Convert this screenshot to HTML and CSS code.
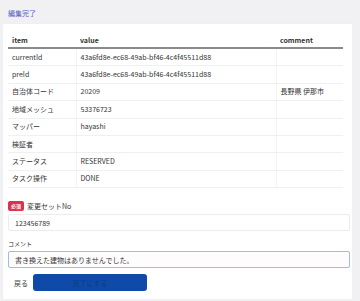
FILE: index.html
```html
<!DOCTYPE html>
<html>
  <head>
    <link rel="stylesheet" href="styles.css">
    <title>編集完了</title>
  </head>
  <body>
    <div class="topbar"><a href="#">編集完了</a></div>
    <div class="card">
      <table class="info">
        <thead>
          <tr><th class="c-item">item</th><th class="c-value">value</th><th class="c-comment">comment</th></tr>
        </thead>
        <tbody>
          <tr><td>currentId</td><td>43a6fd8e-ec68-49ab-bf46-4c4f45511d88</td><td></td></tr>
          <tr><td>preId</td><td>43a6fd8e-ec68-49ab-bf46-4c4f45511d88</td><td></td></tr>
          <tr><td>自治体コード</td><td>20209</td><td>長野県 伊那市</td></tr>
          <tr><td>地域メッシュ</td><td>53376723</td><td></td></tr>
          <tr><td>マッパー</td><td>hayashi</td><td></td></tr>
          <tr><td>検証者</td><td></td><td></td></tr>
          <tr><td>ステータス</td><td>RESERVED</td><td></td></tr>
          <tr><td>タスク操作</td><td>DONE</td><td></td></tr>
        </tbody>
      </table>

      <form class="done-form">
        <label class="field-label"><span class="badge">必須</span>変更セットNo</label>
        <input class="field" value="123456789">
        <label class="field-label plain">コメント</label>
        <input class="field focused" value="書き換えた建物はありませんでした。">
        <div class="actions">
          <a href="#" class="back">戻る</a>
          <button type="button" class="submit">完了にする</button>
        </div>
      </form>
    </div>
  </body>
</html>
```

FILE: styles.css
```css
body {
  margin: 0;
  background-color: #f1f1f3;
  font-family: "Noto Sans CJK JP", "Noto Sans", sans-serif;
  font-size: 7px;
  color: #333;
  width: 352px;
}

.topbar {
  height: 24px;
  display: flex;
  align-items: center;
  padding-left: 8px;
  padding-top: 1px;
  box-sizing: border-box;
}

.topbar a {
  color: #5460c4;
  text-decoration: none;
}

.card {
  background-color: #fff;
  margin-left: 3px;
  padding: 8px 2px 8px 5px;
  box-shadow: 1px 1px 2px rgba(0, 0, 0, 0.12);
}

.info {
  border-collapse: collapse;
  width: 335px;
  font-size: 7px;
  table-layout: fixed;
}

.info th {
  text-align: left;
  font-weight: bold;
  height: 15px;
  padding: 0 4px;
  border-bottom: 2px solid #8a8a8a;
}

.info td {
  height: 16.4px;
  line-height: 9px;
  padding: 0 4px;
  border-bottom: 1px solid #f0f0f0;
  border-right: 1px solid #f3f3f3;
  white-space: nowrap;
}

.info td:last-child {
  border-right: none;
}

.c-item {
  width: 60px;
}

.c-value {
  width: 192px;
}

.done-form {
  display: flex;
  flex-direction: column;
  margin-top: 13px;
}

.field-label {
  display: flex;
  align-items: center;
  height: 10px;
  margin-bottom: 3px;
}

.field-label.plain {
  margin-top: 7px;
  margin-bottom: 3px;
  font-size: 6px;
}

.badge {
  background-color: #d8354a;
  color: #fff;
  font-size: 5px;
  font-weight: bold;
  padding: 0 3px;
  height: 10px;
  line-height: 10px;
  border-radius: 2px;
  margin-right: 3px;
}

.field {
  font-family: inherit;
  font-size: 7px;
  color: #333;
  height: 17px;
  width: 342px;
  padding: 0 6px;
  border: 1px solid #ececec;
  border-radius: 2px;
  box-sizing: border-box;
  outline: none;
}

.field.focused {
  border-color: #9dbaf2;
  background-color: #fffcfd;
}

.actions {
  display: flex;
  align-items: center;
  margin-top: 6px;
  padding-left: 6px;
}

.back {
  color: #444;
  text-decoration: none;
  width: 19px;
}

.submit {
  width: 114px;
  height: 17px;
  background-color: #0f4aa8;
  border: none;
  border-radius: 3px;
  color: #0b3c86;
  font-family: inherit;
  font-size: 7px;
}
```
